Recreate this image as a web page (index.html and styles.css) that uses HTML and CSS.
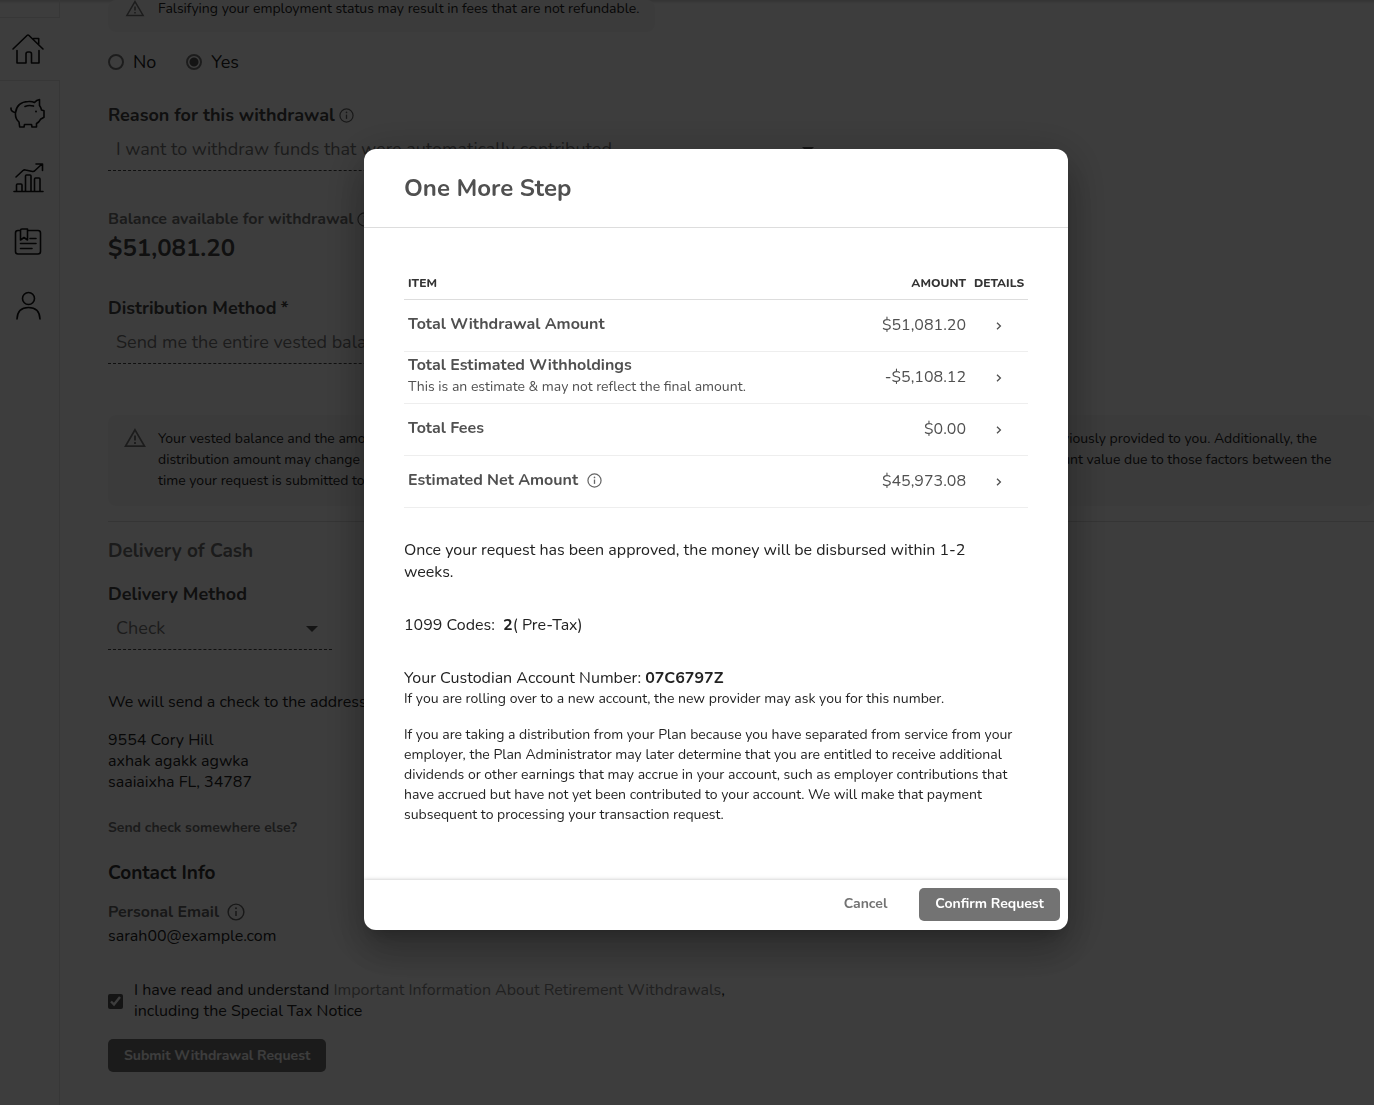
FILE: index.html
```html
<!DOCTYPE html>
<html lang="en">
<head>
<meta charset="utf-8">
<meta name="viewport" content="width=device-width, initial-scale=1">
<title>Withdrawal Request</title>
<link rel="stylesheet" href="styles.css">
</head>
<body>
<svg class="sprite" aria-hidden="true">
  <symbol id="info" viewBox="0 0 16 16"><circle cx="8" cy="8" r="7" fill="none" stroke="currentColor" stroke-width="1.3"/><path d="M8 7v4.6" stroke="currentColor" stroke-width="1.4"/><circle cx="8" cy="4.7" r=".9" fill="currentColor"/></symbol>
  <symbol id="warning" viewBox="0 0 20 18"><path d="M10 1.6 18.6 16.4H1.4Z" fill="none" stroke="currentColor" stroke-width="1.6"/><path d="M10 6.8v4.4M10 12.6v1.8" stroke="currentColor" stroke-width="1.7"/></symbol>
  <symbol id="caret" viewBox="0 0 12 6"><path d="M0 0h12L6 6Z" fill="currentColor"/></symbol>
  <symbol id="chevron" viewBox="0 0 6 8"><path d="M1 .8 4.4 4 1 7.2" fill="none" stroke="currentColor" stroke-width="1.3"/></symbol>
</svg>
<div class="app">
  <nav class="sidebar" aria-label="Main">
    <a class="nav-item nav-item-active" href="#home" aria-label="Home">
      <svg viewBox="0 0 36 36"><path d="M3 18 17 4.500q1-1 2 0L33 18M7 19.500V32h9v-9q0-2 2-2h1.500q2 0 2 2v9H29V19.500M23.500 8.500v-1h5.200V14"/></svg>
    </a>
    <a class="nav-item" href="#savings" aria-label="Savings">
      <svg viewBox="0 0 36 36"><path d="M1 13q-.3 3.600 4 4.500M5.500 18Q6.500 7 18.500 6.500q3.500-.3 6 1 2-2.500 5-3v6q1.600 2 2 4.500l2.500.8v6.500l-3.500 2q-1.500 3-4 4.200V32h-4.500l-.5-2.500h-7L14 32H9.700L9 27Q5 23.500 5.500 18ZM15 11.500q4-1.700 8.500-.4"/><circle class="dot" cx="26" cy="16.500" r="1"/></svg>
    </a>
    <a class="nav-item" href="#performance" aria-label="Performance">
      <svg viewBox="0 0 36 36"><path d="M4 32.500h29M6.500 32v-6q0-1 1-1H11q1 0 1 1v6M15.500 32V17q0-1 1-1H20q1 0 1 1v15M24.500 32V20q0-1 1-1H29q1 0 1 1v12M6 18l7-6.500q1.200-1 2.500-.5l7 1.500q1.500.2 2.500-1L32 5M26 5h6.500V11.500"/></svg>
    </a>
    <a class="nav-item" href="#documents" aria-label="Documents">
      <svg viewBox="0 0 36 36"><path d="M10 7.500H8Q5.500 7.500 5.500 10v18.500Q5.500 31 8 31h20q2.500 0 2.500-2.500V10q0-2.500-2.500-2.500H17.500M10.500 17V7.500Q10.500 6 12 6h5.500v11L14 14.500ZM20 15.500h6M10.500 20.500H26M10.500 25.500H22"/></svg>
    </a>
    <a class="nav-item" href="#profile" aria-label="Profile">
      <svg viewBox="0 0 36 36"><circle cx="18.500" cy="11.500" r="6"/><path d="M7 32Q7.500 20.500 18.500 20.500T30 32"/></svg>
    </a>
  </nav>

  <main class="content">
    <div class="notice notice-top">
      <svg class="notice-icon"><use href="#warning"/></svg>
      <p>Falsifying your employment status may result in fees that are not refundable.</p>
    </div>

    <div class="radios" role="radiogroup" aria-label="Employment status">
      <label><input type="radio" name="status">No</label>
      <label><input type="radio" name="status" checked>Yes</label>
    </div>

    <div class="field field-reason">
      <label class="label" for="reason">Reason for this withdrawal <svg class="info-icon"><use href="#info"/></svg></label>
      <div class="select select-wide">
        <select id="reason"><option>I want to withdraw funds that were automatically contributed.</option></select>
        <svg class="caret"><use href="#caret"/></svg>
      </div>
    </div>

    <div class="balance">
      <p class="balance-label">Balance available for withdrawal <svg class="info-icon"><use href="#info"/></svg></p>
      <p class="balance-value">$51,081.20</p>
    </div>

    <div class="field field-method">
      <label class="label" for="method">Distribution Method <span>*</span></label>
      <div class="select select-wide">
        <select id="method"><option>Send me the entire vested balance</option></select>
        <svg class="caret"><use href="#caret"/></svg>
      </div>
    </div>

    <div class="notice notice-balance">
      <svg class="notice-icon"><use href="#warning"/></svg>
      <p>Your vested balance and the amount available for a distribution shown on this page may be different from the total account balance that was previously provided to you. Additionally, the<br>
      distribution amount may change due to market movement, fees and other investment activity, which can increase or decrease your available account value due to those factors between the<br>
      time your request is submitted to the time it is processed.</p>
    </div>

    <section class="delivery">
      <h2 class="section-title">Delivery of Cash</h2>
      <div class="field field-delivery">
        <label class="label" for="delivery">Delivery Method</label>
        <div class="select select-narrow">
          <select id="delivery"><option>Check</option></select>
          <svg class="caret"><use href="#caret"/></svg>
        </div>
      </div>
      <p class="send-text">We will send a check to the address below:</p>
      <address>9554 Cory Hill<br>axhak agakk agwka<br>saaiaixha FL, 34787</address>
      <a class="text-link" href="#address">Send check somewhere else?</a>
    </section>

    <section class="contact">
      <h2 class="contact-title">Contact Info</h2>
      <p class="contact-label">Personal Email <svg class="info-icon info-large"><use href="#info"/></svg></p>
      <p class="contact-value">sarah00@example.com</p>
    </section>

    <div class="agree">
      <input type="checkbox" id="agree" checked>
      <label for="agree">I have read and understand <a href="#notice">Important Information About Retirement Withdrawals</a>,<br>including the Special Tax Notice</label>
    </div>
    <button class="button" type="button">Submit Withdrawal Request</button>
  </main>
</div>

<div class="overlay">
  <div class="modal" role="dialog" aria-modal="true" aria-labelledby="modal-title">
    <header class="modal-header"><h1 id="modal-title">One More Step</h1></header>
    <div class="modal-body">
      <table class="summary">
        <thead>
          <tr><th scope="col">ITEM</th><th class="amount" scope="col">AMOUNT</th><th class="details" scope="col">DETAILS</th></tr>
        </thead>
        <tbody>
          <tr><th scope="row">Total Withdrawal Amount</th><td class="amount">$51,081.20</td><td class="details"><button class="expand" type="button" aria-label="Withdrawal details"><svg><use href="#chevron"/></svg></button></td></tr>
          <tr><th scope="row">Total Estimated Withholdings<small>This is an estimate &amp; may not reflect the final amount.</small></th><td class="amount">-$5,108.12</td><td class="details"><button class="expand" type="button" aria-label="Withholding details"><svg><use href="#chevron"/></svg></button></td></tr>
          <tr><th scope="row">Total Fees</th><td class="amount">$0.00</td><td class="details"><button class="expand" type="button" aria-label="Fee details"><svg><use href="#chevron"/></svg></button></td></tr>
          <tr><th scope="row"><span class="with-icon">Estimated Net Amount <svg class="info-icon"><use href="#info"/></svg></span></th><td class="amount">$45,973.08</td><td class="details"><button class="expand" type="button" aria-label="Net amount details"><svg><use href="#chevron"/></svg></button></td></tr>
        </tbody>
      </table>
      <p class="text">Once your request has been approved, the money will be disbursed within 1-2 weeks.</p>
      <p class="text">1099 Codes:&nbsp; <b>2</b>( Pre-Tax)</p>
      <div class="text">
        <p>Your Custodian Account Number: <b>07C6797Z</b></p>
        <p class="fine">If you are rolling over to a new account, the new provider may ask you for this number.</p>
      </div>
      <p class="fine legal">If you are taking a distribution from your Plan because you have separated from service from your employer, the Plan Administrator may later determine that you are entitled to receive additional dividends or other earnings that may accrue in your account, such as employer contributions that have accrued but have not yet been contributed to your account. We will make that payment subsequent to processing your transaction request.</p>
    </div>
    <footer class="modal-footer">
      <button class="button button-plain" type="button">Cancel</button>
      <button class="button" type="button">Confirm Request</button>
    </footer>
  </div>
</div>
</body>
</html>
```
FILE: styles.css
```css
* { box-sizing: border-box; }

body {
  margin: 0;
  background: #fff;
  color: #222;
  font: 16px/22px Nunito, "Open Sans", "Noto Sans", sans-serif;
  overflow: hidden;
}

h1, h2, p { margin: 0; }
button, select { font: inherit; color: inherit; }
.sprite { display: none; }

.app {
  display: flex;
  min-height: 100vh;
  box-shadow: inset 0 4px 3px -2px #d8d8d8;
}

/* Sidebar */
.sidebar {
  flex: none;
  display: flex;
  flex-direction: column;
  width: 60px;
  padding-top: 17px;
  border-right: 1px solid #e4e4e4;
}
.nav-item {
  display: flex;
  align-items: center;
  justify-content: center;
  height: 64px;
  padding-right: 3px;
}
.nav-item-active {
  margin-right: -1px;
  padding-right: 4px;
  background: #fff;
  border: solid #e4e4e4;
  border-width: 1px 0;
}
.nav-item svg {
  width: 36px;
  height: 36px;
  fill: none;
  stroke: #111;
  stroke-width: 1.6;
  stroke-linecap: round;
  stroke-linejoin: round;
}
.nav-item .dot { fill: #111; stroke: none; }

/* Page form */
.content { flex: 1; min-width: 0; padding-left: 48px; }

.notice {
  display: flex;
  gap: 12px;
  padding: 13px 16px 15px;
  border-radius: 8px;
  background: #f7f7f7;
  font-size: 14px;
  line-height: 21px;
}
.notice-top {
  width: fit-content;
  padding-top: 0;
  line-height: 17px;
}
.notice-icon { flex: none; width: 22px; height: 20px; color: #777; }
.notice-top .notice-icon { height: 17px; }
.notice-balance { margin-top: 51px; white-space: nowrap; }

.radios {
  display: flex;
  gap: 30px;
  margin-top: 18px;
  font-size: 18px;
  line-height: 24px;
}
.radios label { display: flex; align-items: center; gap: 9px; }
.radios input {
  appearance: none;
  width: 16px;
  height: 16px;
  margin: 0;
  border: 2px solid #777;
  border-radius: 50%;
}
.radios input:checked { background: radial-gradient(circle, #555 4px, transparent 5px); }

.label {
  display: flex;
  align-items: center;
  gap: 4px;
  color: #444;
  font-size: 18px;
  font-weight: 700;
  line-height: 26px;
}
.field-reason { margin-top: 28px; }
.field-method { margin-top: 31px; }
.field-delivery { margin-top: 17px; }
.info-icon { flex: none; width: 15px; height: 15px; color: #666; }
.info-large { width: 18px; height: 18px; }

.select { position: relative; max-width: 100%; }
.select-wide { width: 720px; }
.select-narrow { width: 224px; }
.select select {
  display: block;
  appearance: none;
  width: 100%;
  height: 43px;
  padding: 0 8px;
  border: 0;
  border-bottom: 1px dashed #444;
  border-radius: 0;
  background: transparent;
  color: #777;
  font-size: 18px;
}
.caret { position: absolute; right: 14px; top: 19px; width: 12px; height: 6px; color: #555; }

.balance { margin-top: 37px; }
.balance-label {
  display: flex;
  align-items: center;
  gap: 4px;
  color: #737373;
  font-weight: 700;
}
.balance-value { margin-top: 2px; color: #444; font-size: 24px; font-weight: 700; line-height: 32px; }

.delivery { margin-top: 15px; padding-top: 16px; border-top: 1px solid #ddd; }
.section-title { color: #737373; font-size: 19px; line-height: 26px; }
.send-text { margin-top: 41px; }
address { margin: 17px 0 25px; font-style: normal; line-height: 21px; }
.text-link {
  display: block;
  width: fit-content;
  color: #737373;
  font-size: 14px;
  font-weight: 700;
  line-height: 20px;
  text-decoration: none;
}

.contact { margin-top: 22px; line-height: 24px; }
.contact-title { color: #333; font-size: 19px; line-height: 26px; }
.contact-label {
  display: flex;
  align-items: center;
  gap: 8px;
  margin-top: 14px;
  color: #666;
  font-weight: 700;
}

.agree {
  display: flex;
  align-items: center;
  gap: 11px;
  margin: 32px 0 17px;
  line-height: 21px;
}
.agree input { width: 15px; height: 15px; margin: 0; accent-color: #555; }
.agree a { color: #888; text-decoration: none; }

.button {
  height: 33px;
  padding: 0 16px;
  border: 0;
  border-radius: 5px;
  background: #737373;
  color: #fff;
  font-size: 14px;
  font-weight: 700;
}
.button-plain { background: transparent; color: #737373; }

/* Dialog */
.overlay {
  position: fixed;
  inset: 0;
  display: flex;
  justify-content: center;
  align-items: flex-start;
  padding: 149px 0 0 58px;
  background: rgba(0, 0, 0, .76);
}
.modal {
  width: 704px;
  border-radius: 12px;
  overflow: hidden;
  background: #fff;
  box-shadow: 0 11px 15px -7px rgba(0, 0, 0, .2), 0 24px 38px 3px rgba(0, 0, 0, .14), 0 9px 46px 8px rgba(0, 0, 0, .2);
}
.modal-header { padding: 23px 40px; border-bottom: 1px solid #ddd; }
.modal-header h1 { color: #505050; font-size: 24px; line-height: 32px; }
.modal-body { padding: 40px 40px 55px; }

.summary { width: 100%; border-collapse: collapse; color: #505050; }
.summary th, .summary td {
  height: 52px;
  padding: 0 4px;
  border-bottom: 1px solid #eee;
  text-align: left;
}
.summary tbody th { padding-bottom: 2px; }
.summary thead th {
  height: 31px;
  border-bottom-color: #ddd;
  color: #333;
  font-size: 12px;
  font-weight: 800;
}
.summary small { display: block; font-size: 14px; font-weight: 400; }
.summary .amount { text-align: right; }
.summary .details { width: 58px; padding: 0; text-align: center; }
.with-icon { display: flex; align-items: center; gap: 9px; }
.expand { display: inline-flex; padding: 6px; border: 0; background: none; }
.expand svg { width: 6px; height: 8px; }

.text { max-width: 600px; margin-top: 31px; }
.fine { font-size: 14px; line-height: 20px; }
.legal { margin-top: 16px; }

.modal-footer {
  display: flex;
  justify-content: flex-end;
  gap: 16px;
  padding: 8px 8px 9px;
  box-shadow: 0 0 4px rgba(0, 0, 0, .25);
}
```
